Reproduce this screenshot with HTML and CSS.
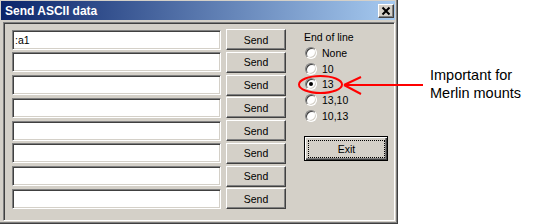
FILE: index.html
```html
<!DOCTYPE html>
<html lang="en">
<head>
    <meta charset="UTF-8">
    <title>Send ASCII data</title>
    <link rel="stylesheet" href="styles.css">
</head>
<body>

    <div class="page">
        <div class="window">
            <div class="titlebar">
                <span class="title">Send ASCII data</span>
                <span class="close">
                    <svg width="14" height="12" viewBox="0 0 14 12">
                        <path d="M3.5 2.5 L10.5 9.5 M10.5 2.5 L3.5 9.5" stroke="#000" stroke-width="2" fill="none"/>
                    </svg>
                </span>
            </div>

            <div class="client">
                <div class="lines">
                    <div class="line"><input class="field" type="text" value=":a1"><button class="btn">Send</button></div>
                    <div class="line"><input class="field" type="text"><button class="btn">Send</button></div>
                    <div class="line"><input class="field" type="text"><button class="btn">Send</button></div>
                    <div class="line"><input class="field" type="text"><button class="btn">Send</button></div>
                    <div class="line"><input class="field" type="text"><button class="btn">Send</button></div>
                    <div class="line"><input class="field" type="text"><button class="btn">Send</button></div>
                    <div class="line"><input class="field" type="text"><button class="btn">Send</button></div>
                    <div class="line"><input class="field" type="text"><button class="btn">Send</button></div>
                </div>

                <div class="eol">
                    <div class="eol-label">End of line</div>
                    <div class="radio"><span class="circle"></span>None</div>
                    <div class="radio"><span class="circle"></span>10</div>
                    <div class="radio"><span class="circle checked"></span>13</div>
                    <div class="radio"><span class="circle"></span>13,10</div>
                    <div class="radio"><span class="circle"></span>10,13</div>
                    <button class="btn btn-default"><span class="focus">Exit</span></button>
                </div>
            </div>
        </div>

        <div class="note">Important for<br>Merlin mounts</div>

        <!-- red markup drawn over the dialog -->
        <svg class="markup" width="534" height="224" viewBox="0 0 534 224">
            <ellipse cx="320.5" cy="84.5" rx="21.5" ry="8.5" fill="none" stroke="#ff0000" stroke-width="2"/>
            <path d="M344 85 L423 85 M344 85 L361 77 M344 85 L361 94" fill="none" stroke="#ff0000" stroke-width="2"/>
        </svg>
    </div>

</body>
</html>
```

FILE: styles.css
```css
:root {
    --face: #d4d0c8;
    --shadow: #808080;
    --dark: #404040;
    --light: #ffffff;
}

* {
    margin: 0;
    padding: 0;
    box-sizing: border-box;
}

body {
    background-color: #ffffff;
    font-family: 'Liberation Sans', Arial, sans-serif;
}

.page {
    position: relative;
    display: flex;
    width: 534px;
    height: 224px;
}

.window {
    display: flex;
    flex-direction: column;
    width: 398px;
    height: 224px;
    padding: 1px 2px 2px 1px;
    background-color: var(--face);
    border-right: 1px solid var(--dark);
    border-bottom: 1px solid var(--dark);
    box-shadow: inset -1px -1px var(--shadow);
}

.titlebar {
    display: flex;
    align-items: center;
    justify-content: space-between;
    height: 19px;
    padding: 0 1px 0 4px;
    background: linear-gradient(to right, #0a246a, #a6caf0);
}

.title {
    color: white;
    font-weight: bold;
    font-size: 12px;
    padding-top: 1px;
}

.close {
    display: flex;
    align-items: center;
    justify-content: center;
    width: 16px;
    height: 14px;
    background-color: var(--face);
    border: 1px solid;
    border-color: var(--light) var(--dark) var(--dark) var(--light);
    box-shadow: inset -1px -1px var(--shadow);
}

.client {
    flex: 1;
    display: flex;
    margin: 2px 0 0 2px;
    padding: 6px 0 0 8px;
    border: 1px solid;
    border-color: var(--shadow) var(--light) var(--light) var(--shadow);
    box-shadow: inset 1px 1px var(--dark), inset -1px -1px var(--face);
    font-size: 10.5px;
}

.lines {
    display: grid;
    row-gap: 1.75px;
    align-content: start;
}

.line {
    display: flex;
    align-items: center;
    gap: 5px;
    height: 21px;
}

.field {
    width: 209px;
    height: 20px;
    padding: 0 2px;
    background-color: white;
    border: 1px solid;
    border-color: var(--shadow) var(--light) var(--light) var(--shadow);
    box-shadow: inset 1px 1px var(--dark), inset -1px -1px var(--face);
    font-family: 'Liberation Sans', Arial, sans-serif;
    font-size: 10.5px;
    color: black;
    outline: none;
}

.btn {
    width: 60px;
    height: 21px;
    background-color: var(--face);
    border: 1px solid;
    border-color: var(--light) var(--dark) var(--dark) var(--light);
    box-shadow: inset -1px -1px var(--shadow);
    font-family: 'Liberation Sans', Arial, sans-serif;
    font-size: 10.5px;
    color: black;
}

.eol {
    display: flex;
    flex-direction: column;
    margin-left: 18px;
}

.eol-label {
    line-height: 16px;
}

.radio {
    display: flex;
    align-items: center;
    gap: 5px;
    height: 15.75px;
    padding-left: 1px;
}

.radio:first-of-type {
    margin-top: 1px;
}

.circle {
    position: relative;
    width: 12px;
    height: 12px;
    border-radius: 50%;
    background-color: white;
    border: 1px solid;
    border-color: var(--shadow) var(--light) var(--light) var(--shadow);
    box-shadow: inset 1px 1px var(--dark), inset -1px -1px var(--face);
}

.circle.checked::after {
    content: "";
    position: absolute;
    left: 3px;
    top: 3px;
    width: 4px;
    height: 4px;
    border-radius: 50%;
    background-color: black;
}

.btn-default {
    width: 84px;
    height: 25px;
    margin-top: 12.25px;
    padding: 3px 2px 2px 3px;
    border: 1px solid black;
    box-shadow: inset 1px 1px var(--light), inset -1px -1px var(--dark), inset -2px -2px var(--shadow);
}

.focus {
    display: flex;
    align-items: center;
    justify-content: center;
    height: 100%;
    border: 1px dotted black;
}

.note {
    margin: 66px 0 0 32px;
    font-size: 14.5px;
    line-height: 18px;
    color: black;
}

.markup {
    position: absolute;
    left: 0;
    top: 0;
    pointer-events: none;
}
```
